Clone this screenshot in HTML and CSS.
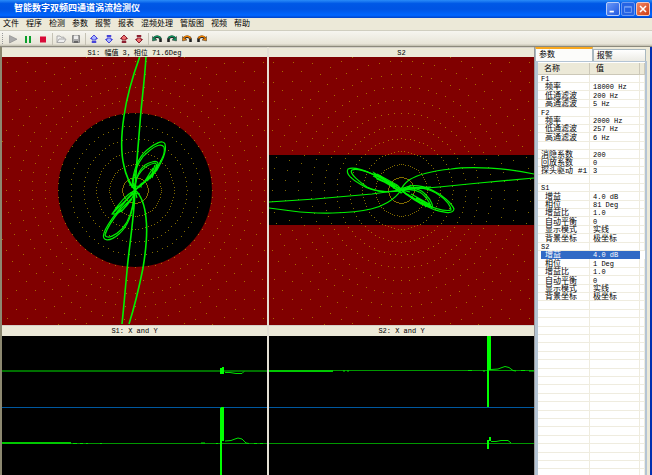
FILE: index.html
```html
<!DOCTYPE html>
<html lang="zh-CN">
<head>
    <meta charset="UTF-8">
    <meta name="viewport" content="width=device-width, initial-scale=1.0">
    <title>智能数字双频四通道涡流检测仪</title>
    <link rel="stylesheet" href="styles.css">
</head>
<body>
    <header class="titlebar">
        <h1>智能数字双频四通道涡流检测仪</h1>
        <div class="window-buttons">
            <button class="win-btn" aria-label="最小化"><svg viewBox="0 0 14 14"><path d="M3 10h5" stroke="#fff" stroke-width="2"/></svg></button>
            <button class="win-btn maximize" aria-label="最大化"><svg viewBox="0 0 14 14"><path d="M3 4h8v7H3zM3 5h8" fill="none" stroke="#7ba4f5"/></svg></button>
            <button class="win-btn close" aria-label="关闭"><svg viewBox="0 0 14 14"><path d="M3.500 3.500l7 7M10.500 3.500l-7 7" stroke="#fff" stroke-width="1.800"/></svg></button>
        </div>
    </header>

    <nav class="menubar">
        <button>文件</button>
        <button>程序</button>
        <button>检测</button>
        <button>参数</button>
        <button>报警</button>
        <button>报表</button>
        <button>混频处理</button>
        <button>管版图</button>
        <button>视频</button>
        <button>帮助</button>
    </nav>

    <svg class="defs" width="0" height="0">
        <defs>
            <symbol id="arrow" viewBox="0 0 12 12"><path d="M6 2L9.500 5.500H8V7H4V5.500H2.500zM4 8.500h4v1H4z" stroke-width="1"/></symbol>
            <symbol id="turn" viewBox="0 0 12 12">
                <path d="M3 6C4 3 8.500 3 9.500 6V9" fill="none" stroke="#222" stroke-width="2.600"/>
                <path d="M3 5C4 2.500 8.500 2.500 9.500 5.500" fill="none" stroke="currentColor" stroke-width="1.600"/>
                <path d="M1.500 3.500V8L6 7z" fill="currentColor" stroke="#333" stroke-width=".5"/>
            </symbol>
        </defs>
    </svg>

    <div class="toolbar">
        <span class="grip"></span>
        <button aria-label="开始"><svg viewBox="0 0 12 12"><path d="M2.500 2.500L10 6.200L2.500 10z" fill="#aaa" stroke="#888" stroke-width=".6"/></svg></button>
        <button aria-label="暂停"><svg viewBox="0 0 12 12"><path d="M3 3h2v7H3zM7 3h2v7H7z" fill="#0ba02c"/></svg></button>
        <button aria-label="停止"><svg viewBox="0 0 12 12"><path d="M3 3.500h6v6H3z" fill="#d80a38"/></svg></button>
        <span class="sep"></span>
        <button aria-label="打开"><svg viewBox="0 0 12 12"><path d="M2 9.500V3h3l1 1.200h3V6M2 9.500L4 6h7L9 9.500z" fill="#eee" stroke="#aaa"/></svg></button>
        <button aria-label="保存"><svg viewBox="0 0 12 12"><path d="M2.500 2.500h7v7h-7z" fill="#aaa" stroke="#888"/><path d="M4 2.500h4V6H4z" fill="#eee"/><path d="M4 8h4v2H4z" fill="#666"/></svg></button>
        <span class="sep"></span>
        <button class="blue" aria-label="上移"><svg><use href="#arrow"/></svg></button>
        <button class="blue down" aria-label="下移"><svg><use href="#arrow"/></svg></button>
        <button class="red" aria-label="增大"><svg><use href="#arrow"/></svg></button>
        <button class="red down" aria-label="减小"><svg><use href="#arrow"/></svg></button>
        <span class="sep"></span>
        <button class="green" aria-label="左转"><svg><use href="#turn"/></svg></button>
        <button class="green flip" aria-label="右转"><svg><use href="#turn"/></svg></button>
        <button class="orange" aria-label="左转微调"><svg><use href="#turn"/></svg></button>
        <button class="orange flip" aria-label="右转微调"><svg><use href="#turn"/></svg></button>
    </div>

    <div class="workspace">
        <main class="charts">
            <h2>S1: 幅值 3，相位 71.6Deg</h2>
            <h2>S2</h2>
            <svg class="scope" viewBox="-133 -133 265 268" preserveAspectRatio="xMidYMid slice">
                <circle r="77"/>
                <path class="dots"/>
                <g class="signal">
                    <path d="M5 -134C-3 -112 -9 -88 -11 -74C-14 -54 -14 -36 -11 -24C-9 -14 -5 -6 0 0C7 6 10 18 11 28C13 45 10 66 8 78C4 98 0 115 -6 134"/>
                    <path d="M11 -134C10 -112 6 -84 5 -67C3 -42 1 -20 0 0C-1 30 -7 65 -8 81C-10 102 -11 115 -13 134"/>
                </g>
                <g class="signal thin">
                    <path d="M-3 -2C-2 -24 5 -34 12 -40C19 -46 28 -51 30 -46C32 -38 27 -29 22 -20C15 -12 6 -5 0 0"/>
                    <path d="M-2 -8C1 -25 6 -33 14 -39C22 -46 27 -46 29 -43C31 -36 25 -28 20 -19L5 -4"/>
                    <path d="M0 0C1 -18 8 -26 17 -28C26 -31 24 -22 17 -15C11 -9 6 -4 0 0"/>
                    <path d="M-1 -2C2 -17 10 -25 20 -27C25 -24 19 -15 12 -9"/>
                    <path d="M22 -26L17 -12M20 -25L15 -11M18 -22L8 -6M21 -20L4 -3"/>
                    <path d="M0 0C-8 9 -28 33 -31 43C-34 52 -25 52 -16 44C-8 37 -2 26 0 0"/>
                    <path d="M-14 19C-23 30 -28 38 -30 45C-28 50 -19 45 -13 39C-5 30 -2 20 -1 5"/>
                    <path d="M0 0C-9 5 -16 13 -23 24C-17 25 -7 18 0 2M-1 3L-21 21M-1 6L-19 24M-4 5L-22 23M-3 9L-14 22"/>
                    <path d="M-7 -9L0 0L7 -7M-6 -5L7 -3M-5 3L5 4M-3 -12L2 8"/>
                </g>
            </svg>
            <svg class="scope" viewBox="-132 -133 265 268" preserveAspectRatio="xMidYMid slice">
                <rect x="-400" y="-35" width="800" height="70"/>
                <path class="dots"/>
                <g class="signal thin">
                    <path d="M133 -16C108 -22 70 -24 50 -21C30 -19 16 -15 8 -10C3 -6 1 -3 0 0C-6 10 -20 17 -30 19C-50 24 -86 24 -109 21L-132 18"/>
                    <path d="M133 -12L78 -7L38 -3L0 0L-29 4L-86 9L-132 12"/>
                    <path d="M0 0C-20 -13 -44 -25 -53 -21C-56 -16 -48 -10 -41 -6C-29 2 -15 3 0 0"/>
                    <path d="M-4 -4C-20 -13 -42 -23 -49 -20C-53 -17 -40 -7 -34 -3C-22 3 -10 2 0 1"/>
                    <path d="M0 0L-27 -17L-24 -11L-5 -3M-2 -2L-28 -14M-3 0L-22 -11M-4 -5L-24 -16M-6 -3L-26 -13"/>
                    <path d="M0 0C9 -7 22 -4 31 0C42 5 51 14 53 19C52 25 42 22 34 20C24 16 12 9 0 0"/>
                    <path d="M2 0C16 -5 30 -1 38 5C46 10 50 17 50 20C44 22 28 17 20 12"/>
                    <path d="M0 0C11 -4 20 -1 25 5C31 11 33 18 30 17C19 15 9 7 0 0M4 0C17 -2 23 4 28 12L30 17L20 14L5 4"/>
                    <path d="M31 17L15 8M30 15L10 4M26 16L6 4M28 13L24 17"/>
                    <path d="M-12 -6L0 3L10 -5M-8 -2L9 2M-4 -5L6 5M0 -2L30 -3"/>
                </g>
            </svg>
            <h2>S1: X and Y</h2>
            <h2>S2: X and Y</h2>
            <svg class="trace" viewBox="0 0 265 139" preserveAspectRatio="none">
                <path class="axis" d="M0 71.500H265"/>
                <path class="base wide" d="M0 35H265"/>
                <path class="base" d="M0 107.500H265"/>
                <path class="pulse wide" d="M0 107H69"/>
                <path class="pulse" d="M71 107.500h4M78 107.500h3M84 107.500h2M98 107.500h2M199 107h4M214 107.500h2"/>
                <path class="pulse" d="M223 36.500h5l6 1h6l2-2M223 105l6-.5l4-1.500l3-1l4 1l4 4l3 .5M252 107.500h3M258 107.500h3"/>
                <path class="fill" d="M218 32h2v-1h2v7h-4zM218 72h1v-1h3v34h-2v34h-2z"/>
            </svg>
            <svg class="trace" viewBox="0 0 265 139" preserveAspectRatio="none">
                <path class="axis" d="M0 71.500H265"/>
                <path class="base" d="M0 34.500H265M0 107.500H265"/>
                <path class="pulse wide" d="M0 35H64"/>
                <path class="pulse" d="M74 35h2M78 35h2M199 34.500h4M214 35h2"/>
                <path class="pulse" d="M222 33.500l7-.5l4-1.500l3-1l4 1l4 3l3 .5M252 34.500h4M260 35h5M222 105.500h5l5-1h7l3 2.500"/>
                <path class="fill" d="M218 0h4v34h-2v37h-2zM218 104h2v-3h2v4h-2v8h-2z"/>
            </svg>
        </main>

        <aside class="side">
            <div class="tabs">
                <button class="tab active">参数</button>
                <button class="tab">报警</button>
            </div>
            <div class="list">
                <table>
                    <thead>
                        <tr><th>名称</th><th>值</th><th class="rest"></th></tr>
                    </thead>
                    <tbody id="params"></tbody>
                </table>
            </div>
        </aside>
    </div>

    <script>
        // [name, value], groups have no value, empty rows separate them
        const params = [
            ['F1'], ['频率', '18000 Hz'], ['低通滤波', '200 Hz'], ['高通滤波', '5 Hz'],
            ['F2'], ['频率', '2000 Hz'], ['低通滤波', '257 Hz'], ['高通滤波', '6 Hz'],
            [],
            ['消隐系数', '200', 'top'], ['回放系数', '0', 'top'], ['探头驱动 #1', '3', 'top'],
            [],
            ['S1'], ['增益', '4.0 dB'], ['相位', '81 Deg'], ['增益比', '1.0'],
            ['自动平衡', '0'], ['显示模式', '实线'], ['背景坐标', '极坐标'],
            ['S2'], ['增益', '4.0 dB', 'selected'], ['相位', '1 Deg'], ['增益比', '1.0'],
            ['自动平衡', '0'], ['显示模式', '实线'], ['背景坐标', '极坐标']
        ];

        const body = document.getElementById('params');
        for (let i = 0; i < 120; i++) {
            const [name = '', value = '', type = ''] = params[i] || [];
            const row = body.insertRow();
            row.className = type;
            const nameCell = row.insertCell();
            nameCell.textContent = name;
            if (value && type !== 'top') nameCell.className = 'child';
            if (/^[\x20-\x7f]+$/.test(name)) nameCell.className = 'latin';
            const valueCell = row.insertCell();
            valueCell.textContent = value;
            if (/^[\x20-\x7f]+$/.test(value)) valueCell.className = 'latin';
            row.insertCell();
        }

        // Polar grid: one dot every 5 degrees on each ring
        let d = '';
        for (let ring = 1; ring < 30; ring++) {
            const r = ring * 12.9;
            for (let a = 0; a < 360; a += 5) {
                const x = Math.round(r * Math.cos(a * Math.PI / 180));
                const y = Math.round(r * Math.sin(a * Math.PI / 180));
                d += `M${x} ${y + 0.5}h1`;
            }
        }
        document.querySelectorAll('.dots').forEach(p => p.setAttribute('d', d));
    </script>
</body>
</html>
```
FILE: styles.css
```css
:root {
    --face: #ece9d8;
    --maroon: #800000;
    --green: #00f000;
    --select: #316ac5;
}

* {
    box-sizing: border-box;
}

body {
    margin: 0;
    height: 100vh;
    display: flex;
    flex-direction: column;
    overflow: hidden;
    background: var(--face);
    color: #000;
    font-family: "Liberation Mono", "Noto Sans CJK SC", monospace;
    font-size: 8px;
    line-height: 8px;
}

button {
    font: inherit;
    color: inherit;
    margin: 0;
    padding: 0;
    border: none;
    background: none;
}

h1, h2 {
    margin: 0;
}

.defs {
    position: absolute;
}

/* Title bar */
.titlebar {
    flex: none;
    display: flex;
    align-items: center;
    justify-content: space-between;
    height: 18px;
    padding: 0 2px 0 14px;
    background: linear-gradient(#2a8cf8, #0058e6 20%, #0054e3 50%, #0066ff 85%, #0042c8);
}

.titlebar h1 {
    font-size: 9px;
    line-height: 18px;
    color: #fff;
}

.window-buttons {
    display: flex;
    gap: 1px;
}

.win-btn {
    width: 14px;
    height: 14px;
    border: 1px solid #b8ccf8;
    border-radius: 2px;
    background: linear-gradient(135deg, #6a98f8, #2058e0);
}

.win-btn svg {
    display: block;
    width: 12px;
    height: 12px;
}

.win-btn.maximize {
    border-color: #6a98f0;
    background: #2563e4;
}

.win-btn.close {
    border-color: #f0c8c0;
    background: linear-gradient(135deg, #f08868, #d03c10);
}

/* Menu and toolbar */
.menubar {
    flex: none;
    display: flex;
    gap: 7px;
    height: 13px;
    padding: 0 3px;
    border-bottom: 1px solid #d0cec0;
}

.toolbar {
    flex: none;
    display: flex;
    align-items: center;
    gap: 3px;
    height: 16px;
    padding: 0 2px;
    border-bottom: 1px solid #8c8a7c;
    background: linear-gradient(#f6f5f0, #e8e5d8 85%, #c0bdae);
}

.toolbar button,
.toolbar svg {
    display: block;
    width: 12px;
    height: 12px;
}

.toolbar .grip {
    width: 2px;
    height: 11px;
    border-left: 1px dotted #999;
}

.toolbar .sep {
    width: 1px;
    height: 12px;
    margin-right: -1px;
    background: #c5c2b5;
}

.blue svg {
    fill: #a8b4ff;
    stroke: #4844d8;
}

.red svg {
    fill: #f07070;
    stroke: #8c2030;
}

.down svg {
    transform: rotate(180deg);
}

.flip svg {
    transform: scaleX(-1);
}

.green {
    color: #10905c;
}

.orange {
    color: #f08000;
}

/* Charts */
.workspace {
    flex: 1;
    min-height: 0;
    display: flex;
}

.charts {
    flex: 1;
    min-width: 0;
    display: grid;
    grid-template-columns: 1fr 1fr;
    grid-template-rows: 10px minmax(0, 268fr) 11px minmax(0, 139fr);
    column-gap: 2px;
    border-left: 2px solid #8c8870;
    border-right: 1px solid #999;
    background: #e4e0d4;
}

.charts h2 {
    font-size: 7px;
    font-weight: normal;
    line-height: 10px;
    text-align: center;
    background: var(--face);
    border-top: 1px solid #d4d0c8;
}

.scope,
.trace {
    display: block;
    width: 100%;
    height: 100%;
    overflow: hidden;
}

.scope {
    background: var(--maroon);
}

.trace {
    background: #000;
}

.dots {
    stroke: #b89800;
    stroke-opacity: .7;
    stroke-width: 1;
    shape-rendering: crispEdges;
}

.signal {
    fill: none;
    stroke: var(--green);
    stroke-width: 1.6;
}

.signal.thin {
    stroke-width: 1.2;
}

.axis {
    stroke: #0058a0;
}

.base {
    stroke: #009800;
}

.base.wide {
    stroke: #007000;
    stroke-width: 2;
}

.pulse {
    fill: none;
    stroke: #00e000;
}

.pulse.wide {
    stroke: #00c800;
    stroke-width: 2;
}

.fill {
    fill: #00ff00;
}

/* Parameter panel */
.side {
    flex: none;
    width: 117px;
    display: flex;
    flex-direction: column;
    padding-right: 3px;
    border-right: 2px solid #0030b0;
}

.tabs {
    flex: none;
    display: flex;
    align-items: flex-end;
    height: 14px;
    padding-right: 1px;
}

.tab {
    flex: 1;
    height: 12px;
    padding: 0 3px;
    text-align: left;
    border: 1px solid #a8b8c0;
    border-bottom: none;
    background: linear-gradient(#fff, #ecebe4);
}

.tab.active {
    flex-grow: 1.1;
    height: 14px;
    border-top: 2px solid #f8a820;
    background: #fcfcfa;
}

.list {
    flex: 1;
    min-height: 0;
    overflow: hidden;
    padding-top: 1px;
    border: solid #b4c4d4;
    border-width: 1px 2px 0 3px;
    background: #fff;
}

table {
    width: 100%;
    table-layout: fixed;
    border-collapse: collapse;
}

th {
    height: 12px;
    padding: 0 6px;
    font-weight: normal;
    text-align: left;
    background: var(--face);
    box-shadow: inset -1px -1px #ccc8b8;
}

th:first-child {
    width: 52px;
}

th.rest {
    width: 5px;
    padding: 0;
}

td {
    height: 8px;
    padding: 0 3px;
    white-space: nowrap;
    box-shadow: inset -1px -1px #efecdf;
}

tr:nth-child(5n+3) td,
tr:nth-child(5n) td {
    height: 9px;
}

td.child {
    padding-left: 7px;
}

td.latin {
    font-size: 7px;
}

.selected td {
    color: #fff;
    background: var(--select);
    box-shadow: none;
}

.selected td:first-child {
    background: linear-gradient(90deg, #fff 3px, var(--select) 3px);
}

.selected td:last-child {
    background: none;
}
```
